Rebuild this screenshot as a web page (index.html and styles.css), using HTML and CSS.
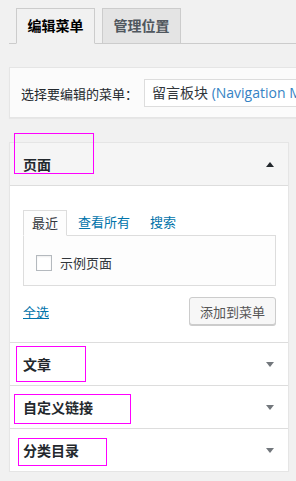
FILE: index.html
```html
<!DOCTYPE html>
<html lang="zh-CN">
<head>
  <meta charset="UTF-8"/>
  <meta name="viewport" content="width=device-width, initial-scale=1.0"/>
  <title>菜单</title>
  <link rel="stylesheet" href="styles.css">
</head>
<body>
  <div class="wrap">

    <!-- Top tabs -->
    <div class="nav-tabs">
      <a class="nav-tab active">编辑菜单</a>
      <a class="nav-tab">管理位置</a>
    </div>

    <!-- Menu picker -->
    <div class="manage-menus">
      <span class="picker-label">选择要编辑的菜单：</span>
      <div class="picker-select">留言板块 <span class="menu-loc">(Navigation M</span></div>
    </div>

    <!-- Accordion of items to add -->
    <div class="accordion">
      <div class="section open">
        <div class="section-title">
          <span>页面</span>
          <i class="arrow up"></i>
          <span class="mark mark-pages"></span>
        </div>
        <div class="section-body">
          <div class="inner-tabs">
            <span class="inner-tab active">最近</span>
            <a class="inner-tab">查看所有</a>
            <a class="inner-tab">搜索</a>
          </div>
          <div class="inner-panel">
            <label class="check-row"><span class="checkbox"></span>示例页面</label>
          </div>
          <div class="section-actions">
            <a class="select-all">全选</a>
            <button class="add-button">添加到菜单</button>
          </div>
        </div>
      </div>

      <div class="section">
        <div class="section-title">
          <span>文章</span>
          <i class="arrow"></i>
          <span class="mark mark-posts"></span>
        </div>
      </div>

      <div class="section">
        <div class="section-title">
          <span>自定义链接</span>
          <i class="arrow"></i>
          <span class="mark mark-links"></span>
        </div>
      </div>

      <div class="section">
        <div class="section-title">
          <span>分类目录</span>
          <i class="arrow"></i>
          <span class="mark mark-cats"></span>
        </div>
      </div>
    </div>

  </div>
</body>
</html>
```

FILE: styles.css
```css
/**********************************************
 *  Page
 **********************************************/
body {
  margin: 0;
  background-color: #f1f1f1;
  color: #23282d;
  font-family: "Open Sans", "Noto Sans CJK SC", sans-serif;
  font-size: 13px;
  overflow: hidden;
}

.wrap {
  padding: 8px 0 0 9px;
}

a {
  color: #0073aa;
}

/**********************************************
 *  Top tabs
 **********************************************/
.nav-tabs {
  display: flex;
  padding-left: 7px;
  border-bottom: 1px solid #ccc;
}

.nav-tab {
  box-sizing: border-box;
  width: 79px;
  height: 36px;
  margin-bottom: -1px;
  margin-right: 7px;
  border: 1px solid #ccc;
  background-color: #e4e4e4;
  color: #50575e;
  font-size: 14px;
  font-weight: bold;
  line-height: 34px;
  text-align: center;
}

.nav-tab.active {
  background-color: #f1f1f1;
  border-bottom-color: #f1f1f1;
  color: #000;
}

/**********************************************
 *  Menu picker (runs past the right edge)
 **********************************************/
.manage-menus {
  display: flex;
  align-items: center;
  margin-top: 23px;
  margin-right: -20px;
  padding: 11px 0 10px 11px;
  border: 1px solid #e5e5e5;
  background-color: #fbfbfb;
  box-shadow: 0 1px 1px rgba(0, 0, 0, 0.04);
}

.picker-label {
  width: 123px;
}

.picker-select {
  box-sizing: border-box;
  height: 28px;
  flex-grow: 1;
  min-width: 0;
  padding-left: 7px;
  border: 1px solid #ddd;
  background-color: #fff;
  font-size: 14px;
  line-height: 26px;
  white-space: nowrap;
  overflow: hidden;
  color: #32373c;
}

.menu-loc {
  color: #3582c4;
}

/**********************************************
 *  Accordion
 **********************************************/
.accordion {
  width: 278px;
  margin-top: 24px;
  border: 1px solid #e5e5e5;
  background-color: #fff;
  box-shadow: 0 1px 1px rgba(0, 0, 0, 0.04);
}

.section-title {
  position: relative;
  display: flex;
  justify-content: space-between;
  align-items: center;
  height: 42px;
  padding-left: 13px;
  border-bottom: 1px solid #ddd;
  font-size: 14px;
  font-weight: bold;
}

.section:last-child .section-title {
  border-bottom: none;
}

.open .section-title {
  background-color: #f5f5f5;
}

.arrow {
  width: 0;
  height: 0;
  margin-right: 14px;
  border-left: 4px solid transparent;
  border-right: 4px solid transparent;
  border-top: 5px solid #72777c;
}

.arrow.up {
  border-top: none;
  border-bottom: 5px solid #23282d;
}

/* magenta annotation boxes drawn over the titles */
.mark {
  position: absolute;
  box-sizing: border-box;
  border: 1px solid #f0f;
}

.mark-pages { left: 4px;  top: -10px; width: 80px;  height: 41px; }
.mark-posts { left: 6px;  top: 3px;   width: 70px;  height: 36px; }
.mark-links { left: 4px;  top: 8px;   width: 117px; height: 30px; }
.mark-cats  { left: 8px;  top: 9px;   width: 89px;  height: 28px; }

.section-body {
  padding: 24px 12px 17px 13px;
  border-bottom: 1px solid #ddd;
}

/**********************************************
 *  Inner tabs + list
 **********************************************/
.inner-tabs {
  display: flex;
  align-items: flex-end;
}

.inner-tab {
  height: 25px;
  margin-right: 20px;
  line-height: 25px;
  font-size: 13px;
}

.inner-tab.active {
  box-sizing: border-box;
  width: 44px;
  height: 26px;
  margin-right: 11px;
  margin-bottom: -1px;
  border: 1px solid #ddd;
  border-bottom-color: #fdfdfd;
  background-color: #fdfdfd;
  text-align: center;
  color: #32373c;
}

.inner-panel {
  height: 49px;
  border: 1px solid #ddd;
  background-color: #fdfdfd;
}

.check-row {
  display: flex;
  align-items: center;
  padding: 17px 0 0 12px;
  color: #32373c;
}

.checkbox {
  box-sizing: border-box;
  width: 16px;
  height: 16px;
  margin-right: 8px;
  border: 1px solid #b4b9be;
  background-color: #fff;
  box-shadow: inset 0 1px 2px rgba(0, 0, 0, 0.07);
}

.section-actions {
  display: flex;
  justify-content: space-between;
  align-items: center;
  margin-top: 11px;
}

.select-all {
  text-decoration: underline;
}

.add-button {
  box-sizing: border-box;
  width: 87px;
  height: 28px;
  padding: 0;
  border: 1px solid #ccc;
  border-radius: 3px;
  background-color: #f7f7f7;
  box-shadow: 0 1px 0 #ccc;
  color: #555;
  font-family: "Open Sans", "Noto Sans CJK SC", sans-serif;
  font-size: 13px;
}
```
